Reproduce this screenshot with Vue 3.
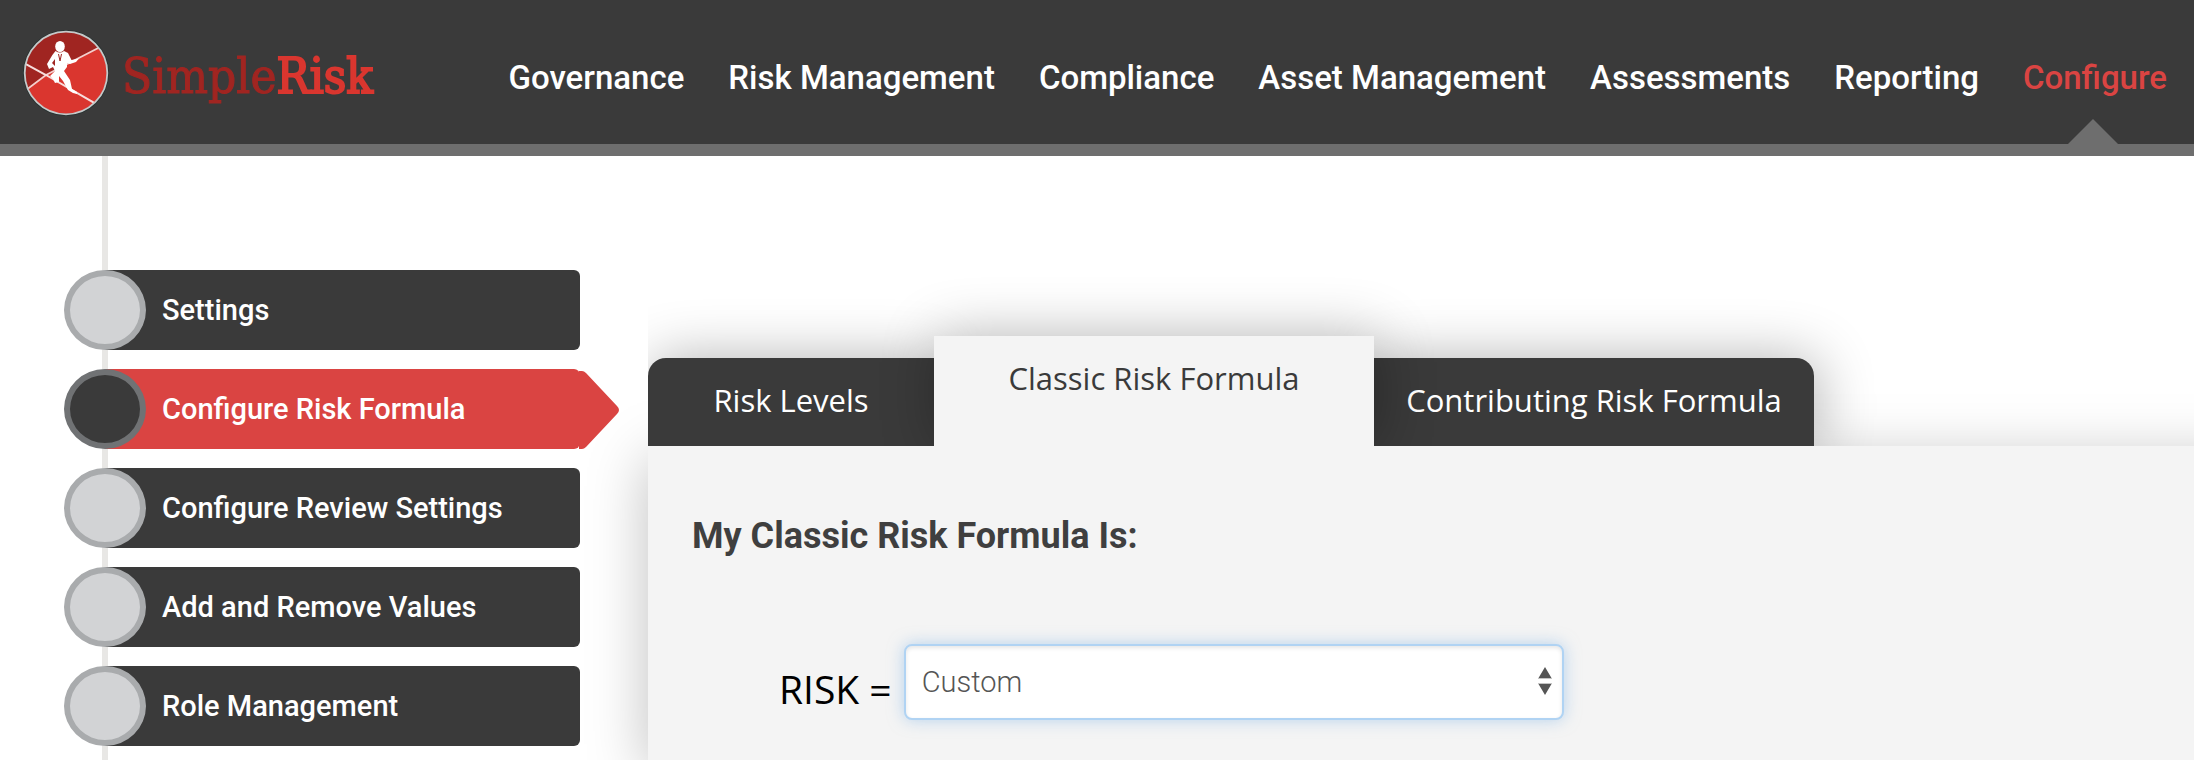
<script setup>
import { ref } from 'vue'

const navItems = ['Governance', 'Risk Management', 'Compliance', 'Asset Management', 'Assessments', 'Reporting', 'Configure']
const activeNav = ref('Configure')

const sideItems = ['Settings', 'Configure Risk Formula', 'Configure Review Settings', 'Add and Remove Values', 'Role Management']
const activeSide = ref('Configure Risk Formula')

const tabs = ['Risk Levels', 'Classic Risk Formula', 'Contributing Risk Formula']
const activeTab = ref('Classic Risk Formula')

const formula = ref('Custom')
</script>

<template>
  <div class="page">
    <header class="header">
      <a class="logo" href="#" aria-label="SimpleRisk">
        <svg class="logo-mark" viewBox="0 0 88 88" aria-hidden="true">
          <defs>
            <clipPath id="disc"><circle cx="44" cy="44" r="41" /></clipPath>
          </defs>
          <circle cx="44" cy="44" r="43" fill="#263231" />
          <g clip-path="url(#disc)">
            <rect width="88" height="88" fill="#da362f" />
            <path d="M0 0H88V13L24 46L0 64Z" fill="#a02521" />
            <path d="M0 64L24 46L51 32L88 13" fill="none" stroke="#f3cfcd" stroke-width="1.8" />
            <path d="M0 33L24 46L88 83" fill="none" stroke="#f7dedd" stroke-width="2" />
          </g>
          <circle cx="44" cy="44" r="41.3" fill="none" stroke="#c6c9c9" stroke-width="1.8" />
          <ellipse cx="38" cy="17.5" rx="4.8" ry="5.6" fill="#fff" />
          <path d="M33.500 22Q38 25 42 22L46 24Q48 28 49.500 31L57 29.500L54 33L48 35L45 34V38L42 42Q46 48 48 51L50 60L55 63V65L51 64L46 61L41 52L37 47L37 53L33 54L31 50L28 47L33 42L31 38L27 40L25 35L28 30Q30 26 33.500 22ZM33 30L30 34L33 37Z" fill="#fff" fill-rule="evenodd" />
          <path d="M36.500 25L38 32L39.500 25" fill="none" stroke="#a02521" stroke-width="1" />
        </svg>
        <span class="logo-text"><span>Simple</span><span class="logo-strong">Risk</span></span>
      </a>
      <nav class="nav" aria-label="Main">
        <a
          v-for="item in navItems"
          :key="item"
          href="#"
          class="nav-link"
          :class="{ active: item === activeNav }"
          @click.prevent="activeNav = item"
        >{{ item }}</a>
      </nav>
    </header>

    <div class="body">
      <aside class="sidebar">
        <nav class="side-nav" aria-label="Configure">
          <a
            v-for="item in sideItems"
            :key="item"
            href="#"
            class="side-link"
            :class="{ active: item === activeSide }"
            @click.prevent="activeSide = item"
          >
            <span class="dot"></span>
            <span class="side-label">{{ item }}</span>
            <svg v-if="item === activeSide" class="arrow" viewBox="0 0 42 80" aria-hidden="true">
              <path d="M0 2H3Q5 2 7 4L38 37Q42 41 38 45L7 78Q5 80 3 80H0Z" fill="#da4442" />
            </svg>
          </a>
        </nav>
      </aside>

      <main class="content">
        <div class="tabs" role="tablist">
          <button
            v-for="tab in tabs"
            :key="tab"
            type="button"
            role="tab"
            class="tab"
            :class="{ active: tab === activeTab }"
            :aria-selected="tab === activeTab"
            @click="activeTab = tab"
          >{{ tab }}</button>
        </div>
        <section class="panel">
          <h1 class="title">My Classic Risk Formula Is:</h1>
          <div class="formula">
            <label class="formula-label" for="formula">RISK =</label>
            <div class="select-wrap">
              <select id="formula" v-model="formula" class="select">
                <option>Custom</option>
              </select>
              <svg class="carets" viewBox="0 0 14 28" aria-hidden="true">
                <path d="M7 0L13.500 11H.5ZM7 28L13.500 17H.5Z" fill="#555" />
                <path d="M0 11.500H14M0 16.500H14" stroke="#c4c4c4" stroke-width="1" />
              </svg>
            </div>
          </div>
        </section>
      </main>
    </div>
  </div>
</template>

<style>
body {
  background: #fff;
}
</style>

<style scoped>
.page {
  min-height: 100vh;
  display: flex;
  flex-direction: column;
  overflow: clip;
  font-family: Roboto, "Noto Sans", sans-serif;
}
.header {
  display: flex;
  align-items: stretch;
  justify-content: space-between;
  height: 144px;
  padding: 0 27px 0 22px;
  background: #3a3a3a;
  border-bottom: 12px solid #6e6e6e;
}
.logo {
  display: flex;
  align-items: center;
  gap: 12px;
  padding-top: 2px;
  color: #a02521;
  text-decoration: none;
}
.logo-mark {
  width: 88px;
  height: 88px;
}
.logo-text {
  padding-top: 8px;
  font-family: "DejaVu Serif Condensed", "DejaVu Serif", serif;
  font-size: 49px;
  line-height: 56px;
  -webkit-text-stroke: 1px currentColor;
}
.logo-strong {
  color: #da362f;
  -webkit-text-stroke: 2px currentColor;
}
.nav {
  display: flex;
  gap: 44px;
}
.nav-link {
  position: relative;
  padding-top: 58px;
  color: #fff;
  font-size: 33px;
  font-weight: 500;
  line-height: 40px;
  text-decoration: none;
  white-space: nowrap;
}
.nav-link.active {
  color: #da4442;
}
.nav-link.active::after {
  content: "";
  position: absolute;
  left: 50%;
  bottom: 0;
  width: 50px;
  height: 25px;
  margin-left: -27px;
  background: #6e6e6e;
  clip-path: polygon(50% 0, 100% 100%, 0 100%);
}
.body {
  flex: 1;
  display: grid;
  grid-template-columns: 580px minmax(0, 1fr);
  column-gap: 68px;
}
.sidebar {
  padding: 114px 0 14px 64px;
  background: linear-gradient(#e8e7e5, #e8e7e5) 102px 0 / 6px 100% no-repeat;
}
.side-nav {
  display: flex;
  flex-direction: column;
  gap: 19px;
}
.side-link {
  position: relative;
  z-index: 1;
  display: flex;
  align-items: center;
  gap: 16px;
  height: 80px;
  color: #fff;
  font-size: 29px;
  font-weight: 500;
  text-decoration: none;
  background: linear-gradient(#3a3a3a, #3a3a3a) 41px 0 no-repeat;
  border-radius: 0 6px 6px 0;
}
.dot {
  box-sizing: border-box;
  width: 82px;
  height: 80px;
  border: 6px solid #a9abad;
  border-radius: 50%;
  background: #d2d3d5;
}
.side-label {
  line-height: 36px;
  white-space: nowrap;
}
.side-link.active {
  background-image: linear-gradient(#da4442, #da4442);
}
.side-link.active .dot {
  border-color: #707274;
  background: #3a3a3a;
}
.arrow {
  position: absolute;
  left: 100%;
  top: 0;
  width: 42px;
  height: 80px;
  margin-left: -1px;
}
.content {
  display: flex;
  flex-direction: column;
  padding-top: 180px;
}
.tabs {
  position: relative;
  z-index: 1;
  display: flex;
  align-items: flex-end;
  clip-path: inset(-70px -70px 0 0);
}
.tab {
  box-sizing: border-box;
  width: 440px;
  height: 88px;
  padding: 0 0 4px;
  border: 0;
  color: #fff;
  font-family: "Open Sans", "Noto Sans", sans-serif;
  font-size: 31px;
  line-height: 84px;
  white-space: nowrap;
  background: #3a3a3a;
  box-shadow: 4px 0 56px rgba(0, 0, 0, 0.3);
}
.tab:first-child {
  width: 286px;
  border-radius: 18px 0 0 0;
}
.tab:last-child {
  border-radius: 0 18px 0 0;
}
.tab.active {
  position: relative;
  z-index: 1;
  height: 110px;
  padding-bottom: 26px;
  color: #3a3a3a;
  background: #f4f4f4;
}
.panel {
  flex: 1;
  margin-right: -60px;
  padding: 65px 44px 39px;
  background: #f4f4f4;
  box-shadow: 0 12px 56px rgba(0, 0, 0, 0.25);
}
.title {
  margin: 0;
  color: #3f3f3f;
  font-size: 36px;
  font-weight: 700;
  line-height: 50px;
}
.formula {
  display: flex;
  align-items: center;
  gap: 12px;
  margin: 83px 0 0 87px;
}
.formula-label {
  padding-top: 14px;
  color: #000;
  font-family: "Open Sans", "Noto Sans", sans-serif;
  font-size: 39px;
  line-height: 48px;
  white-space: nowrap;
}
.select-wrap {
  position: relative;
  width: 660px;
}
.select {
  box-sizing: border-box;
  width: 100%;
  height: 76px;
  padding: 0 44px 0 16px;
  appearance: none;
  border: 2px solid #b0d3f3;
  border-radius: 8px;
  outline: 0;
  color: #555;
  font-family: Roboto, "Noto Sans", sans-serif;
  font-size: 29px;
  font-weight: 300;
  background: #fff;
  box-shadow: inset 0 2px 4px rgba(0, 0, 0, 0.1), 0 0 16px rgba(130, 180, 230, 0.55);
}
.carets {
  position: absolute;
  right: 12px;
  top: 23px;
  width: 14px;
  height: 28px;
  pointer-events: none;
}
</style>
